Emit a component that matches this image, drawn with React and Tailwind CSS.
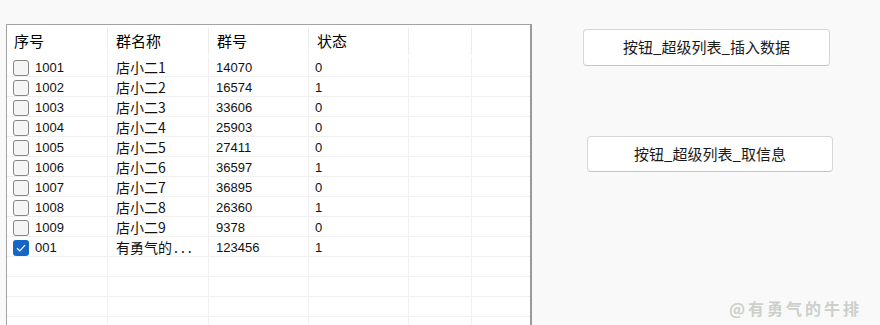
import React from 'react';

const rows = [
  { id: '1001', name: '店小二1', no: '14070', st: '0' },
  { id: '1002', name: '店小二2', no: '16574', st: '1' },
  { id: '1003', name: '店小二3', no: '33606', st: '0' },
  { id: '1004', name: '店小二4', no: '25903', st: '0' },
  { id: '1005', name: '店小二5', no: '27411', st: '0' },
  { id: '1006', name: '店小二6', no: '36597', st: '1' },
  { id: '1007', name: '店小二7', no: '36895', st: '0' },
  { id: '1008', name: '店小二8', no: '26360', st: '1' },
  { id: '1009', name: '店小二9', no: '9378', st: '0' },
  { id: '001', name: '有勇气的...', no: '123456', st: '1', checked: true },
];

const font = { fontFamily: '"Liberation Sans", "Noto Sans CJK SC", sans-serif' };
const cjk = { fontFamily: '"Noto Sans CJK SC", "Liberation Sans", sans-serif' };

function Checkbox({ checked }) {
  if (checked) {
    return (
      <span className="w-[16px] h-[16px] rounded-[3px] bg-[#1467c4] flex items-center justify-center">
        <svg width="10" height="8" viewBox="0 0 10 8">
          <polyline points="1,4.2 3.8,6.8 9,1.2" fill="none" stroke="white" strokeWidth="1.2" />
        </svg>
      </span>
    );
  }
  return <span className="w-[16px] h-[16px] rounded-[3px] border border-[#858585] bg-[#f5f5f5]" />;
}

export default function App() {
  const empty = [0, 1, 2, 3];
  return (
    <div className="relative h-[325px] w-[880px] overflow-hidden bg-[#f9f9f9] flex items-start" style={font}>
      {/* super list */}
      <div className="ml-[6px] mt-[24px] w-[526px] h-[320px] bg-white border border-[#a3a3a3] border-r-2 border-r-[#9a9a9a]">
        <div className="grid grid-cols-[101px_101px_100px_100px_63px_1fr] h-[32px] text-[15px] text-black" style={cjk}>
          {['序号', '群名称', '群号', '状态', '', ''].map((h, i) => (
            <div key={i} className="flex items-start pt-[7px]">
              <span className={`flex-1 leading-[18px] ${i === 0 ? 'pl-[7px]' : 'pl-[8px]'}`}>{h}</span>
              {i < 5 && <span className="w-px h-[27px] mt-[-4px] bg-[#ececec]" />}
            </div>
          ))}
        </div>
        {rows.map((r) => (
          <div key={r.id} className="grid grid-cols-[101px_101px_100px_100px_63px_1fr] h-[20px] border-b border-[#f0f0f0] text-[13px] text-[#111]">
            <div className="flex items-center pl-[6px] gap-[6px] border-r border-[#f0f0f0]">
              <Checkbox checked={r.checked} />
              <span>{r.id}</span>
            </div>
            <div className="flex items-center pl-[8px] text-[14px] border-r border-[#f0f0f0]" style={cjk}>
              {r.checked ? <span>有勇气的<span className="tracking-[3px] ml-[2px]">...</span></span> : r.name}
            </div>
            <div className="flex items-center pl-[7px] border-r border-[#f0f0f0]">{r.no}</div>
            <div className="flex items-center pl-[6px] border-r border-[#f0f0f0]">{r.st}</div>
            <div className="border-r border-[#f0f0f0]" />
            <div />
          </div>
        ))}
        {empty.map((k) => (
          <div key={k} className="grid grid-cols-[101px_101px_100px_100px_63px_1fr] h-[20px] border-b border-[#f0f0f0]">
            <div className="border-r border-[#f0f0f0]" />
            <div className="border-r border-[#f0f0f0]" />
            <div className="border-r border-[#f0f0f0]" />
            <div className="border-r border-[#f0f0f0]" />
            <div className="border-r border-[#f0f0f0]" />
            <div />
          </div>
        ))}
      </div>

      {/* buttons */}
      <div className="ml-[51px] flex flex-col items-start" style={cjk}>
        <button className="mt-[29px] w-[247px] h-[37px] bg-white border border-[#d6d6d6] border-b-[#c4c4c4] rounded-[4px] text-[15px] text-[#1a1a1a] flex items-center justify-center">
          按钮_超级列表_插入数据
        </button>
        <button className="ml-[4px] mt-[70px] w-[246px] h-[36px] bg-white border border-[#d6d6d6] border-b-[#c4c4c4] rounded-[4px] text-[15px] text-[#1a1a1a] flex items-center justify-center">
          按钮_超级列表_取信息
        </button>
      </div>

      {/* watermark */}
      <div className="absolute left-[729px] top-[296px] text-[16px] font-bold text-[#cbd0cb] tracking-[3px]" style={cjk}>
        @有勇气的牛排
      </div>
    </div>
  );
}
